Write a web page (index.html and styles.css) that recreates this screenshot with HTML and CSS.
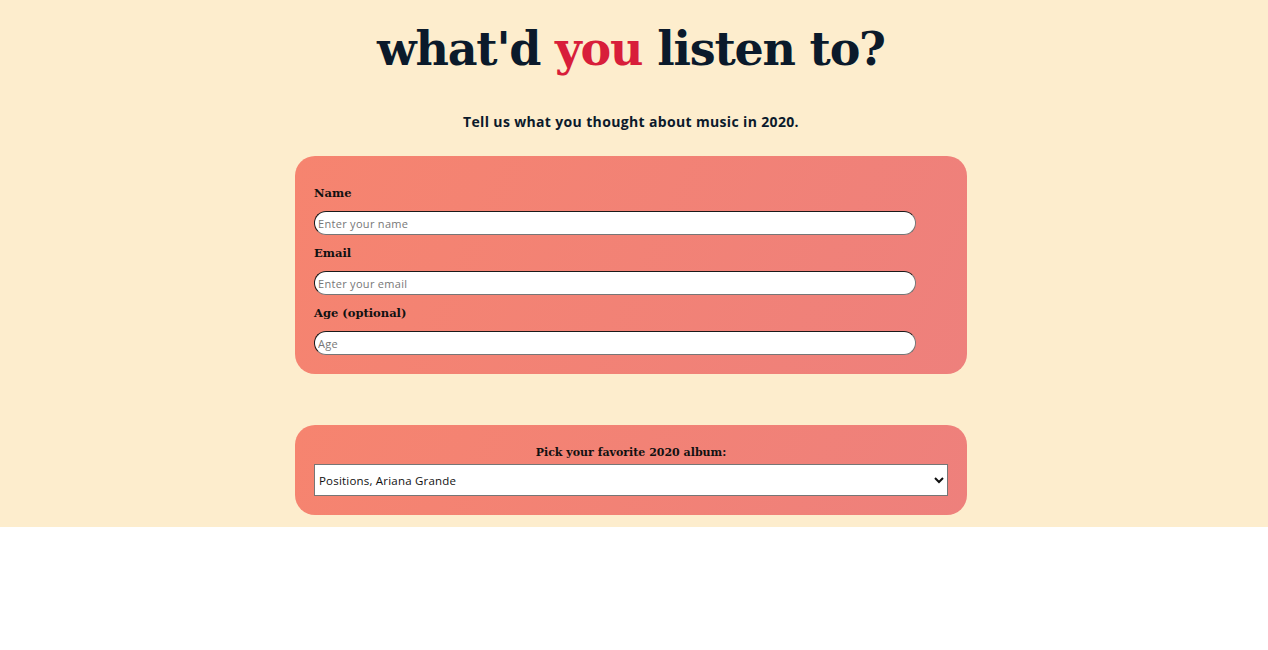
FILE: index.html
```html
<!DOCTYPE html>
<html lang="en">
<head>
<meta charset="utf-8">
<title>what'd you listen to?</title>
<link rel="stylesheet" href="styles.css">
</head>
<body>
<div class="page">
  <h1 class="title">what'd <span class="accent">you</span> listen to?</h1>
  <p class="subtitle">Tell us what you thought about music in 2020.</p>
  <form class="card card-info">
    <label class="label" for="name">Name</label>
    <input class="field" id="name" type="text" placeholder="Enter your name">
    <label class="label" for="email">Email</label>
    <input class="field" id="email" type="email" placeholder="Enter your email">
    <label class="label" for="age">Age (optional)</label>
    <input class="field" id="age" type="text" placeholder="Age">
  </form>
  <form class="card card-album">
    <label class="label label-center" for="album">Pick your favorite 2020 album:</label>
    <select class="select" id="album">
      <option>Positions, Ariana Grande</option>
    </select>
  </form>
</div>
</body>
</html>
```
FILE: styles.css
```css
html, body {
  margin: 0;
  padding: 0;
  background: #ffffff;
}

.page {
  background: #fdedcd;
  display: flex;
  flex-direction: column;
  align-items: center;
  padding: 17px 6px 12px 0;
}

.title {
  margin: 0;
  font-family: "DejaVu Serif", serif;
  font-weight: bold;
  font-size: 46px;
  line-height: 64px;
  color: #0b1a2b;
  letter-spacing: -1.2px;
}

.accent {
  color: #d81e3a;
}

.subtitle {
  margin: 32px 0 0;
  font-family: "Open Sans", sans-serif;
  font-weight: 700;
  font-size: 14px;
  line-height: 18px;
  letter-spacing: 0.35px;
  color: #0b1a2b;
}

.card {
  box-sizing: border-box;
  width: 672px;
  padding: 19px;
  border-radius: 20px;
  background: linear-gradient(115deg, #f6846f 0%, #ee807c 100%);
  display: flex;
  flex-direction: column;
}

.card-info {
  margin-top: 25px;
  padding-top: 27px;
}

.card-album {
  margin-top: 51px;
  padding-top: 20px;
  padding-bottom: 19px;
}

.label {
  font-family: "DejaVu Serif", serif;
  font-weight: bold;
  font-size: 11.5px;
  line-height: 16px;
  color: #111;
  padding-top: 2px;
  margin-bottom: 10px;
}

.label-center {
  text-align: center;
  font-size: 11px;
  padding-top: 0;
  margin-bottom: 3px;
}

.field {
  box-sizing: border-box;
  width: 95%;
  height: 24px;
  margin: 0 0 8px;
  padding: 0 3px;
  border-radius: 12px;
  border: 1px solid #1a1a1a;
  border-bottom-color: #767676;
  border-right-color: #767676;
  background: #fff;
  font-family: "Open Sans", sans-serif;
  font-size: 11px;
  letter-spacing: 0.3px;
  color: #222;
  outline: none;
}

.field:last-child {
  margin-bottom: 0;
}

.field::placeholder {
  color: #777;
}

.select {
  box-sizing: border-box;
  width: 100%;
  height: 32px;
  padding: 0;
  border: 1px solid #767676;
  border-radius: 0;
  background: #fff;
  font-family: "Open Sans", sans-serif;
  font-size: 11.5px;
  letter-spacing: 0.2px;
  color: #111;
}
```
